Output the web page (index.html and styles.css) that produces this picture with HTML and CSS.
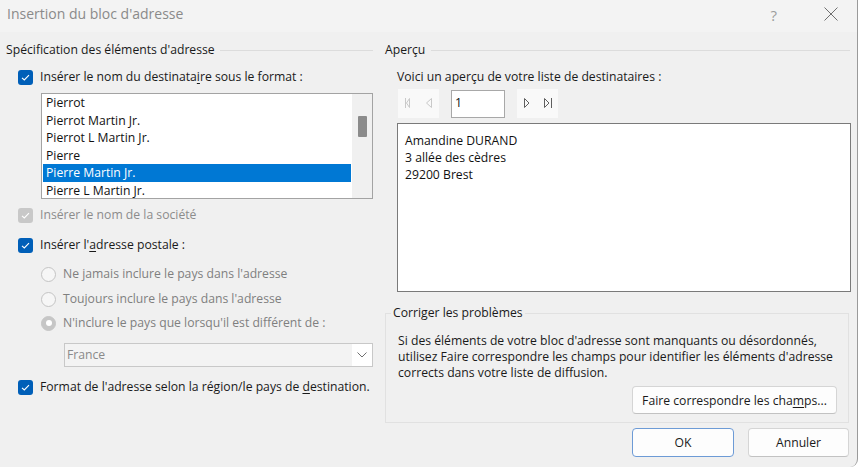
FILE: index.html
```html
<!DOCTYPE html>
<html lang="fr">
<head>
<meta charset="utf-8">
<title>Insertion du bloc d'adresse</title>
<link rel="stylesheet" href="styles.css">
</head>
<body>
<div class="window">
  <div class="titlebar">
    <span class="title">Insertion du bloc d'adresse</span>
    <span class="help">?</span>
    <svg class="close" width="14" height="14" viewBox="0 0 14 14"><path d="M0.5 0.5 L13.5 13.5 M13.5 0.5 L0.5 13.5" stroke="#6f6f6f" stroke-width="1" fill="none"/></svg>
  </div>
  <div class="content">
    <section class="left">
      <div class="heading"><span>Spécification des éléments d'adresse</span><span class="rule"></span></div>

      <div class="row cbrow r-name">
        <span class="cb"><svg width="15" height="15" viewBox="0 0 15 15"><path d="M4 7.8 L6.3 10 L11 5.2" stroke="#fff" stroke-width="1.1" fill="none"/></svg></span>
        <span>Insérer le nom du destinata<u>i</u>re sous le format :</span>
      </div>

      <div class="listbox">
        <div class="items">
          <div class="item">Pierrot</div>
          <div class="item">Pierrot Martin Jr.</div>
          <div class="item">Pierrot L Martin Jr.</div>
          <div class="item">Pierre</div>
          <div class="item selected">Pierre Martin Jr.</div>
          <div class="item">Pierre L Martin Jr.</div>
        </div>
        <div class="scroll"><div class="thumb"></div></div>
      </div>

      <div class="row cbrow r-soc disabled">
        <span class="cb off"><svg width="15" height="15" viewBox="0 0 15 15"><path d="M4 7.8 L6.3 10 L11 5.2" stroke="#fff" stroke-width="1.1" fill="none"/></svg></span>
        <span>Insérer le nom de la société</span>
      </div>

      <div class="row cbrow r-addr">
        <span class="cb"><svg width="15" height="15" viewBox="0 0 15 15"><path d="M4 7.8 L6.3 10 L11 5.2" stroke="#fff" stroke-width="1.1" fill="none"/></svg></span>
        <span>Insérer l'<u>a</u>dresse postale :</span>
      </div>

      <div class="row radiorow r-rad1"><span class="radio"></span><span>Ne jamais inclure le pays dans l'adresse</span></div>
      <div class="row radiorow r-rad2"><span class="radio"></span><span>Toujours inclure le pays dans l'adresse</span></div>
      <div class="row radiorow r-rad3"><span class="radio on"></span><span>N'inclure le pays que lorsqu'il est différent de :</span></div>

      <div class="combo">
        <span class="combo-text">France</span>
        <span class="combo-btn"><svg width="10" height="6" viewBox="0 0 10 6"><path d="M0.5 0.5 L5 5 L9.5 0.5" stroke="#707070" stroke-width="1" fill="none"/></svg></span>
      </div>

      <div class="row cbrow r-fmt">
        <span class="cb"><svg width="15" height="15" viewBox="0 0 15 15"><path d="M4 7.8 L6.3 10 L11 5.2" stroke="#fff" stroke-width="1.1" fill="none"/></svg></span>
        <span>Format de l'adresse selon la région/le pays de <u>d</u>estination.</span>
      </div>
    </section>

    <section class="right">
      <div class="heading"><span>Aperçu</span><span class="rule rule-r"></span></div>
      <div class="row voici">Voici un aperçu de votre liste de destinataires :</div>
      <div class="nav">
        <span class="navgrp"><svg width="41" height="29" viewBox="0 0 41 29"><path d="M7.5 9 V19 M11.5 9.5 L8.5 14 L11.5 18.5 Z M33.5 9.5 L28.5 14 L33.5 18.5 Z" stroke="#c9c9c9" stroke-width="1" fill="none"/></svg></span>
        <span class="navinput">1</span>
        <span class="navgrp"><svg width="41" height="29" viewBox="0 0 41 29"><path d="M7.5 9.5 L12 14 L7.5 18.5 Z M27.5 9.5 L32 14 L27.5 18.5 Z M34.5 9 V19" stroke="#5f5f5f" stroke-width="1" fill="none"/></svg></span>
      </div>
      <div class="preview">
        <div>Amandine DURAND</div>
        <div>3 allée des cèdres</div>
        <div>29200 Brest</div>
      </div>
      <fieldset class="group">
        <legend>Corriger les problèmes</legend>
        <p class="para">Si des éléments de votre bloc d'adresse sont manquants ou désordonnés,<br>utilisez Faire correspondre les champs pour identifier les éléments d'adresse<br>corrects dans votre liste de diffusion.</p>
        <div class="fbtn-row"><button class="btn btn-match">Faire correspondre les cha<u>m</u>ps...</button></div>
      </fieldset>
      <div class="actions">
        <button class="btn btn-ok">OK</button>
        <button class="btn btn-cancel">Annuler</button>
      </div>
    </section>
  </div>
</div>
</body>
</html>
```

FILE: styles.css
```css
html, body {
  margin: 0;
  padding: 0;
}
body {
  width: 860px;
  height: 467px;
  overflow: hidden;
  background: #ffffff;
  font-family: "Open Sans", "Noto Sans", sans-serif;
  font-size: 12.2px;
  color: #1a1a1a;
}
u {
  text-decoration-thickness: 1px;
  text-underline-offset: 2px;
}
.window {
  width: 857px;
  height: 467px;
  background: #f0f0f0;
  border-right: 1px solid #9a9a9a;
  border-bottom-right-radius: 8px;
  display: flex;
  flex-direction: column;
}
.titlebar {
  height: 32px;
  box-sizing: border-box;
  background: #f3f3f3;
  display: flex;
  align-items: flex-start;
  padding: 5px 19px 0 7px;
}
.title {
  flex: 1;
  font-size: 14px;
  line-height: 18px;
  color: #8a8a8a;
}
.help {
  font-size: 15px;
  line-height: 18px;
  color: #9c9c9c;
  margin-right: 47px;
  margin-top: 1px;
}
.close {
  margin-top: 2px;
}
.content {
  display: grid;
  grid-template-columns: 367px 466px;
  column-gap: 12px;
  padding-left: 6px;
}
.heading {
  display: flex;
  align-items: center;
  height: 16px;
  line-height: 16px;
  margin-top: 10px;
  white-space: nowrap;
}
.heading .rule {
  flex: 1;
  height: 1px;
  background: #dcdcdc;
  margin-left: 5px;
}
.heading .rule-r {
  margin-left: 6px;
  margin-right: 1px;
}
.row {
  display: flex;
  align-items: center;
  height: 16px;
  line-height: 16px;
  white-space: nowrap;
}
.cbrow {
  margin-left: 12px;
  gap: 7px;
}
.cb {
  width: 15px;
  height: 15px;
  border-radius: 3px;
  background: #005fb8;
  display: flex;
  flex: none;
}
.cb.off {
  background: #c8c8c8;
}
.disabled {
  color: #8c8c8c;
}
.r-name { margin-top: 11px; }
.r-soc { margin-top: 8px; }
.r-addr { margin-top: 14px; }
.r-rad1 { margin-top: 13px; }
.r-rad2 { margin-top: 9px; }
.r-rad3 { margin-top: 8px; }
.r-fmt { margin-top: 12px; }

.listbox {
  margin: 8px 0 0 35px;
  width: 332px;
  height: 106px;
  box-sizing: border-box;
  border: 1px solid #a3a3a3;
  background: #ffffff;
  display: flex;
}
.items {
  flex: 1;
  overflow: hidden;
  margin: 0 1px 0 1px;
}
.item {
  height: 17.5px;
  line-height: 17.5px;
  padding-left: 3px;
  white-space: nowrap;
  color: #111;
}
.item.selected {
  background: #0078d4;
  color: #ffffff;
}
.scroll {
  width: 20px;
  background: #f0f0f0;
}
.thumb {
  width: 9px;
  height: 21px;
  margin: 22px 0 0 6px;
  background: #8b8b8b;
  border-radius: 1px;
}
.radiorow {
  margin-left: 35px;
  gap: 7px;
  color: #7f7f7f;
}
.radio {
  width: 15px;
  height: 15px;
  box-sizing: border-box;
  border-radius: 50%;
  border: 1px solid #c4c4c4;
  background: #f6f6f6;
  flex: none;
}
.radio.on {
  background: #c6c6c6;
  border-color: #c6c6c6;
  display: flex;
  align-items: center;
  justify-content: center;
}
.radio.on::after {
  content: "";
  width: 6px;
  height: 6px;
  border-radius: 50%;
  background: #ffffff;
}
.combo {
  margin: 12px 0 0 58px;
  width: 309px;
  height: 24px;
  box-sizing: border-box;
  border: 1px solid #c8c8c8;
  background: #f3f3f3;
  display: flex;
}
.combo-text {
  flex: 1;
  padding-left: 2px;
  line-height: 22px;
  color: #8a8a8a;
}
.combo-btn {
  width: 20px;
  background: #ffffff;
  display: flex;
  align-items: center;
  justify-content: center;
}

.voici {
  margin: 11px 0 0 12px;
}
.nav {
  display: flex;
  align-items: center;
  gap: 12px;
  height: 29px;
  margin: 4px 0 0 13px;
}
.navgrp {
  width: 41px;
  height: 29px;
  background: #f9f9f9;
  display: flex;
}
.navinput {
  width: 54px;
  height: 28px;
  box-sizing: border-box;
  border: 1px solid #a8a8a8;
  background: #ffffff;
  padding-left: 3px;
  line-height: 24px;
  color: #111;
}
.preview {
  margin: 5px 0 0 12px;
  width: 454px;
  height: 169px;
  box-sizing: border-box;
  border: 1px solid #7a7a7a;
  background: #ffffff;
  padding: 8px 0 0 7px;
  line-height: 17px;
  color: #111;
}
.group {
  margin: 13px 0 0 0;
  width: 464px;
  box-sizing: border-box;
  border: 1px solid #e1e1e1;
  padding: 12px 11px 8px 12px;
  min-width: 0;
}
.group legend {
  padding: 0 2px;
  margin-left: -7px;
  line-height: 16px;
}
.para {
  margin: 0;
  line-height: 16px;
  white-space: nowrap;
}
.fbtn-row {
  display: flex;
  justify-content: flex-end;
  margin-top: 5px;
}
.btn {
  font: inherit;
  color: #1a1a1a;
  background: #fdfdfd;
  border: 1px solid #d5d5d5;
  border-bottom-color: #c2c2c2;
  border-radius: 4px;
  padding: 0;
  display: flex;
  align-items: center;
  justify-content: center;
}
.btn-match {
  width: 205px;
  height: 28px;
}
.actions {
  display: flex;
  justify-content: flex-end;
  gap: 14px;
  margin: 5px 2px 0 0;
}
.btn-ok {
  width: 102px;
  height: 29px;
  border-color: #6d9bd6;
}
.btn-cancel {
  width: 101px;
  height: 29px;
}
```
